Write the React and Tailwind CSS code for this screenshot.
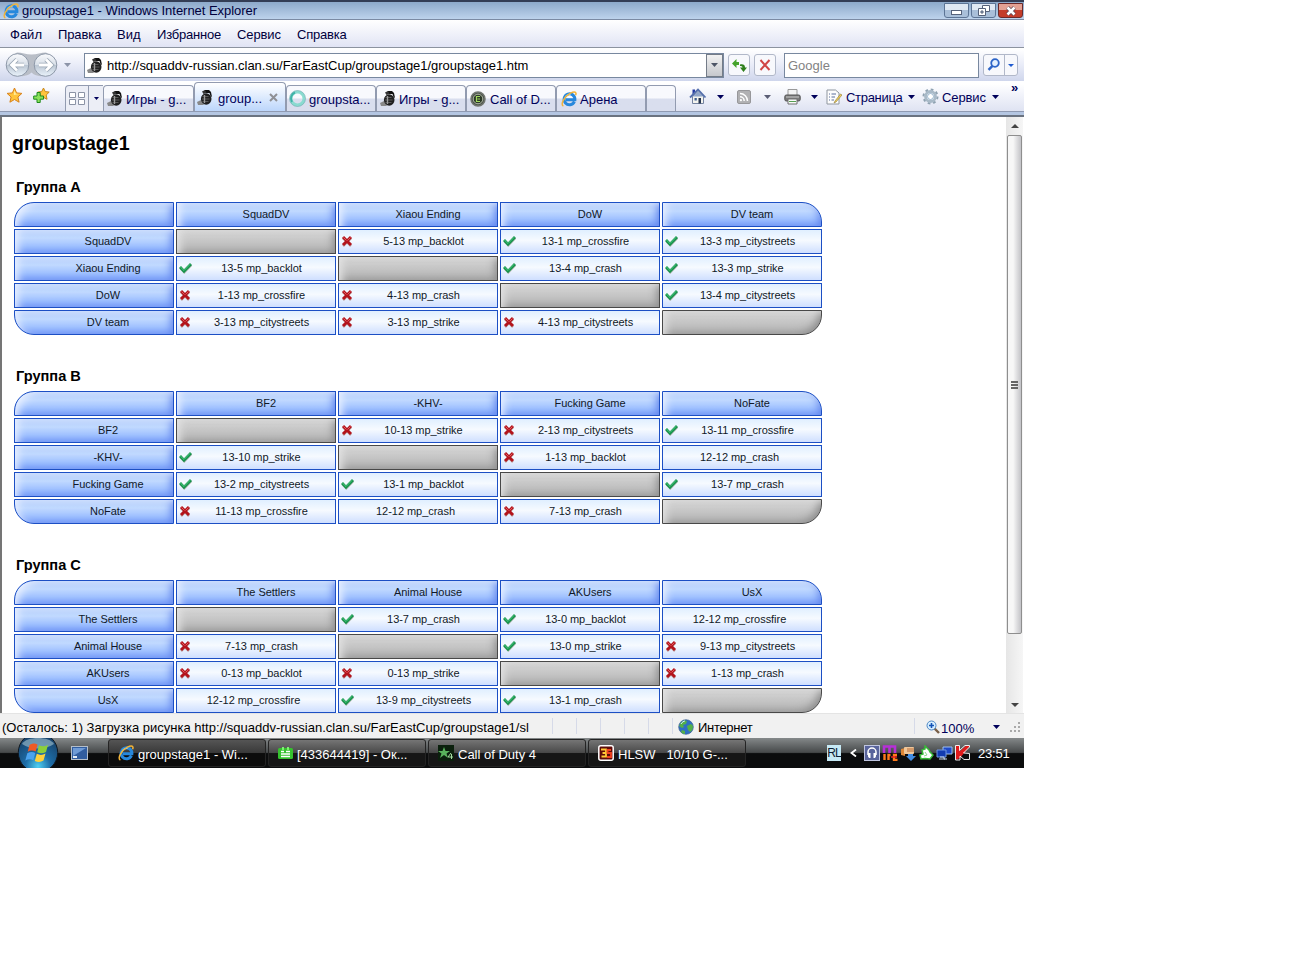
import { clsx } from 'clsx';

const groups = [
    {
        title: 'Группа A',
        teams: ['SquadDV', 'Xiaou Ending', 'DoW', 'DV team'],
        results: [
            [null, '5-13 mp_backlot', '13-1 mp_crossfire', '13-3 mp_citystreets'],
            ['13-5 mp_backlot', null, '13-4 mp_crash', '13-3 mp_strike'],
            ['1-13 mp_crossfire', '4-13 mp_crash', null, '13-4 mp_citystreets'],
            ['3-13 mp_citystreets', '3-13 mp_strike', '4-13 mp_citystreets', null],
        ],
    },
    {
        title: 'Группа B',
        teams: ['BF2', '-KHV-', 'Fucking Game', 'NoFate'],
        results: [
            [null, '10-13 mp_strike', '2-13 mp_citystreets', '13-11 mp_crossfire'],
            ['13-10 mp_strike', null, '1-13 mp_backlot', '12-12 mp_crash'],
            ['13-2 mp_citystreets', '13-1 mp_backlot', null, '13-7 mp_crash'],
            ['11-13 mp_crossfire', '12-12 mp_crash', '7-13 mp_crash', null],
        ],
    },
    {
        title: 'Группа C',
        teams: ['The Settlers', 'Animal House', 'AKUsers', 'UsX'],
        results: [
            [null, '13-7 mp_crash', '13-0 mp_backlot', '12-12 mp_crossfire'],
            ['7-13 mp_crash', null, '13-0 mp_strike', '9-13 mp_citystreets'],
            ['0-13 mp_backlot', '0-13 mp_strike', null, '1-13 mp_crash'],
            ['12-12 mp_crossfire', '13-9 mp_citystreets', '13-1 mp_crash', null],
        ],
    },
];

/* ---------- icons ---------- */

function IeIcon() {
    return (
        <svg width="16" height="16" viewBox="0 0 16 16" className="shrink-0">
            <path d="M13.4 10.6A5.4 5.4 0 1 1 13.9 8.7H5" fill="none" stroke="#2788dc" strokeWidth="3" />
            <path d="M4 7A4.6 4.6 0 0 1 9.5 3.6" fill="none" stroke="#8edaff" strokeWidth="1.2" />
            <path d="M2.4 15C-1 13.5 3.2 5.6 9.4 2.2 13.8 0 16 1.2 14.6 4.2" fill="none" stroke="#f2b43a" strokeWidth="1.5" />
        </svg>
    );
}

function Grenade() {
    return (
        <svg width="17" height="17" viewBox="0 0 17 17" className="shrink-0">
            <path d="M0 13l4-2 3 5H1z" fill="#888" />
            <path d="M6 4L8 1h4l2 2 1 5-1.5-1-1-3z" fill="#111" />
            <ellipse cx="9.2" cy="10" rx="5.3" ry="5.8" fill="#202020" />
            <path d="M5.5 7.500h6M5 10h7.500M5.500 12.500h6" stroke="#585858" />
            <path d="M7.500 6v8" stroke="#999" strokeWidth="1.4" />
            <path d="M5 2.500L8 1l1.500 3-3 1z" fill="#333" />
        </svg>
    );
}

function Caret({ color = '#00005a' }) {
    return (
        <svg width="7" height="4" viewBox="0 0 7 4" className="shrink-0">
            <path d="M0 0h7L3.5 4z" fill={color} />
        </svg>
    );
}

function Star() {
    return (
        <svg width="17" height="17" viewBox="0 0 17 17" className="shrink-0">
            <path d="M8.5 1l2.1 4.9 5.3.5-4 3.6 1.2 5.2-4.6-2.7-4.6 2.7 1.2-5.2-4-3.6 5.3-.5z" fill="#ffc43c" stroke="#d9821a" />
            <path d="M8.5 3.5l1.3 3.3 3 .3-5 1z" fill="#fff0a8" />
        </svg>
    );
}

function StarPlus() {
    return (
        <svg width="17" height="17" viewBox="0 0 17 17" className="shrink-0">
            <path d="M10.5 1l1.7 3.6 4 .5-3 2.9.8 4.3-3.5-2-3.8 2 .9-4.3-2.9-2.9 4-.5z" fill="#ffc43c" stroke="#c8871a" />
            <path d="M4 5.5h3.2V9h3.3v3.2H7.2v3.3H4v-3.3H.7V9H4z" fill="#8be25a" stroke="#1e8a1e" />
        </svg>
    );
}

function NavButtons() {
    return (
        <svg width="56" height="28" viewBox="0 0 56 28" className="shrink-0">
            <defs>
                <linearGradient id="nav" x1="0" y1="0" x2="0" y2="1">
                    <stop offset="0" stopColor="#fafbfd" />
                    <stop offset=".48" stopColor="#d8dfe8" />
                    <stop offset=".52" stopColor="#bcc7d4" />
                    <stop offset="1" stopColor="#eaf3fb" />
                </linearGradient>
            </defs>
            <path d="M13 1.500c5 0 9 2 14.500 2s9.500-2 14.500-2a12.500 12.500 0 1 1-14.500 20A12.500 12.500 0 1 1 13 1.500z" fill="#b9bec7" />
            <circle cx="13.5" cy="14" r="11.3" fill="url(#nav)" stroke="#8d98a8" />
            <circle cx="41.5" cy="14" r="11.3" fill="url(#nav)" stroke="#8d98a8" />
            <path d="M20 14H8M13 8.500L7.500 14l5.500 5.500" fill="none" stroke="#9aa6b5" strokeWidth="4.5" />
            <path d="M20 14H8M13 8.500L7.500 14l5.500 5.500" fill="none" stroke="#fff" strokeWidth="2.8" />
            <path d="M35 14h12M42 8.500l5.500 5.500-5.500 5.500" fill="none" stroke="#9aa6b5" strokeWidth="4.5" />
            <path d="M35 14h12M42 8.500l5.500 5.500-5.500 5.500" fill="none" stroke="#fff" strokeWidth="2.8" />
        </svg>
    );
}

function Spinner() {
    return (
        <svg width="17" height="17" viewBox="0 0 17 17" className="shrink-0">
            <circle cx="8.5" cy="8.5" r="6.5" fill="none" stroke="#8adbd0" strokeWidth="3" />
            <path d="M3 12A6.5 6.5 0 0 1 6 2.500" fill="none" stroke="#3fb3a8" strokeWidth="2" />
            <circle cx="8.5" cy="8.5" r="8" fill="none" stroke="#6fa9b0" strokeWidth=".6" />
        </svg>
    );
}

function CodIcon() {
    return (
        <svg width="16" height="16" viewBox="0 0 16 16" className="shrink-0">
            <circle cx="8" cy="8" r="7" fill="#4f564e" stroke="#70756f" strokeWidth="1.5" />
            <circle cx="8" cy="8" r="4.8" fill="#2c3a28" stroke="#b0b8a6" />
            <path d="M10 5.500H6.500v5H10M7.500 8H10" fill="none" stroke="#9fd65d" strokeWidth="1.2" />
        </svg>
    );
}

function Check() {
    return (
        <svg width="13" height="12" viewBox="0 0 13 12" className="shrink-0">
            <path d="M1.5 6.5l3.8 4L12.5 3" fill="none" stroke="#b5bab6" strokeWidth="2.2" />
            <path d="M1 5l4 4.200L12 2" fill="none" stroke="#15914a" strokeWidth="2.8" />
            <path d="M1.2 4.8L5 8.5l6.2-6.300" fill="none" stroke="#52cc84" strokeWidth="1" />
        </svg>
    );
}

function Cross() {
    return (
        <svg width="12" height="12" viewBox="0 0 12 12" className="shrink-0">
            <path d="M2 3l8 8M10 3l-8 8" stroke="#b9a5a5" strokeWidth="2.5" />
            <path d="M2 2l8 8M10 2l-8 8" stroke="#b3141c" strokeWidth="3" />
            <path d="M2.5 2.500l3 3M9.500 2.500l-3 3" stroke="#e25a5f" />
        </svg>
    );
}

function HomeIcon() {
    return (
        <svg width="18" height="17" viewBox="0 0 18 17" className="shrink-0">
            <path d="M3.5 1.500h2.500v5H3.500z" fill="#2238a0" />
            <path d="M3.5 8.500L9.500 3l5 5.500v7h-11z" fill="#f4f4ee" stroke="#7583a0" />
            <path d="M4 8.500L9 3.500l5.500 5z" fill="#8fa5c9" />
            <path d="M1 9.500L9 1.500l7.500 8" fill="none" stroke="#5570ad" strokeWidth="1.8" />
            <path d="M9.5 10H12v5.500H9.500z" fill="#26344f" />
            <path d="M5.5 10h2.300v2.500H5.500z" fill="#3f5f92" />
        </svg>
    );
}

function RssIcon() {
    return (
        <svg width="14" height="14" viewBox="0 0 14 14" className="shrink-0">
            <rect x=".5" y=".5" width="13" height="13" rx="1.5" fill="#b1b1b3" stroke="#97979a" />
            <path d="M3 3.500a7.500 7.500 0 0 1 7.500 7.500M3 6.800A4.200 4.200 0 0 1 7.200 11" fill="none" stroke="#fff" strokeWidth="1.5" />
            <circle cx="3.9" cy="10.2" r="1.1" fill="#fff" />
        </svg>
    );
}

function PrinterIcon() {
    return (
        <svg width="17" height="16" viewBox="0 0 17 16" className="shrink-0">
            <path d="M4 .5h9V7H4z" fill="#f3f3f3" stroke="#999" />
            <rect x=".8" y="6" width="15.4" height="6" rx="1.5" fill="#7b7b7b" stroke="#545454" />
            <path d="M4 10h9v5H4z" fill="#fafafa" stroke="#6e6e6e" />
            <path d="M2 8h13" stroke="#c9c9c9" />
            <path d="M5 12.500h7" stroke="#57a052" />
        </svg>
    );
}

function PageIcon() {
    return (
        <svg width="16" height="16" viewBox="0 0 16 16" className="shrink-0">
            <path d="M1 1h8.500L13 4v11H1z" fill="#fdfdfd" stroke="#8f969f" />
            <path d="M3 5h1M5.500 5H10M3 8h1M5.500 8H9M3 11h1M5.500 11H8" stroke="#5a6f9c" />
            <path d="M14.5 5l-5.500 7-1 2 2-1 6-7z" fill="#f0cf59" stroke="#8b793a" strokeWidth=".6" />
        </svg>
    );
}

function GearIcon() {
    return (
        <svg width="17" height="17" viewBox="0 0 17 17" className="shrink-0">
            <circle cx="8.5" cy="8.5" r="7" fill="none" stroke="#8fa2b1" strokeWidth="2" strokeDasharray="2.7 2.8" />
            <circle cx="8.5" cy="8.5" r="5" fill="#fff" stroke="#a9bac8" strokeWidth="2.8" />
            <circle cx="8.5" cy="8.5" r="3" fill="#fff" stroke="#7fa3c2" strokeWidth=".8" />
        </svg>
    );
}

function RefreshIcon() {
    return (
        <svg width="15" height="13" viewBox="0 0 15 13">
            <path d="M0 4.500L4.500 0v3H7v3H4.500v3z" fill="#45a32c" />
            <path d="M8 5.500c3-.5 5 0 5 3h2L11.500 13 8 8.500h2.500c0-1-.7-1.500-2.500-1.500z" fill="#2f7f1c" />
        </svg>
    );
}

function Globe() {
    return (
        <svg width="16" height="16" viewBox="0 0 16 16" className="shrink-0">
            <circle cx="8" cy="8" r="7.3" fill="#2e6fc4" stroke="#3c6291" strokeWidth=".7" />
            <path d="M3 3.500C5 1 8 1 9 2L8 5 5 6l1 2-2 1-3-2zM9 7l4-2 2 2c0 3-1 5-3 6l-2-2zM4 11l3 1v3c-2 0-3-1-4-2z" fill="#54b04a" />
            <path d="M3 5c1-2 3-3 4-3" stroke="#d6efff" fill="none" />
        </svg>
    );
}

function StartOrb() {
    return (
        <svg width="42" height="30" viewBox="0 0 42 30" className="shrink-0">
            <defs>
                <radialGradient id="orb" cx=".5" cy=".85" r=".8">
                    <stop offset="0" stopColor="#4fd0f2" />
                    <stop offset=".4" stopColor="#1d6ca6" />
                    <stop offset="1" stopColor="#173f66" />
                </radialGradient>
            </defs>
            <circle cx="21" cy="14.5" r="19.7" fill="url(#orb)" stroke="#101820" />
            <path d="M5 6C9-2 33-2 37 6c-9 6-23 6-32 0z" fill="#9bbccb" opacity=".65" />
            <path d="M12.500 7c3-2 5.500-2 8-.5l-1.800 7c-3-1.500-5.500-1.500-8 .2z" fill="#ef5a25" />
            <path d="M22 7.200c3 1.600 6 1.500 9-.4l-2 7.200c-3 1.700-6 1.800-8.800.2z" fill="#8ccf3a" />
            <path d="M10.300 15.300c3-1.800 5.500-1.700 8-.3l-2 7.200c-2.600-1.300-5-1.300-8 .3z" fill="#4ba3ee" />
            <path d="M19.800 15.800c3 1.500 5.500 1.500 8.700-.2l-2 7c-3 1.800-5.700 1.800-8.700.3z" fill="#ffd13c" />
        </svg>
    );
}

/* ---------- browser chrome ---------- */

function TitleBar() {
    return (
        <div className="h-[20px] flex items-center justify-between border-t-2 border-b border-t-[#333d55] border-b-[#7b8aa3] bg-linear-to-b from-[#8da9ca] to-[#bdd3ec]">
            <div className="flex items-center gap-[3px] pl-[3px] text-[#00003c]">
                <IeIcon />
                <span className="tracking-[-0.03px]">groupstage1 - Windows Internet Explorer</span>
            </div>
            <div className="flex gap-[2px] h-[15px] pr-[1px]">
                <div className="w-[25px] rounded-b-[3px] border border-[#5c7495] bg-linear-to-b from-[#dfe8f3] from-45% to-[#a9bfd9] to-50% flex items-end justify-center pb-[2px]">
                    <div className="w-[11px] h-[5px] bg-white border border-[#56627a]" />
                </div>
                <div className="w-[25px] rounded-b-[3px] border border-[#5c7495] bg-linear-to-b from-[#dfe8f3] from-45% to-[#a9bfd9] to-50% flex items-center justify-center">
                    <svg width="12" height="11" viewBox="0 0 12 11">
                        <path d="M4.5.5h7v6h-7z" fill="#fff" stroke="#56627a" />
                        <path d="M.5 3.500h7v7h-7z" fill="#fff" stroke="#56627a" />
                        <path d="M3 6h2v2H3z" fill="#b5c7dd" stroke="#56627a" />
                    </svg>
                </div>
                <div className="w-[25px] rounded-b-[3px] border border-[#6b2a2a] bg-linear-to-b from-[#e4a193] from-45% to-[#c43d2a] to-50% flex items-center justify-center">
                    <svg width="12" height="10" viewBox="0 0 12 10">
                        <path d="M2.500 1.500l7 7M9.500 1.500l-7 7" stroke="#5d4350" strokeWidth="4" />
                        <path d="M2.500 1.500l7 7M9.500 1.500l-7 7" stroke="#fff" strokeWidth="2.6" />
                    </svg>
                </div>
            </div>
        </div>
    );
}

function MenuBar() {
    return (
        <div className="h-[28px] flex items-center gap-4 pl-[10px] pt-[2px] border-b border-[#8c939f] bg-linear-to-b from-white to-[#e1e4f4] text-[#00003c]">
            <span className="w-[32px]">Файл</span>
            <span className="w-[43px] tracking-[-0.1px]">Правка</span>
            <span className="w-[24px]">Вид</span>
            <span className="w-[64px] tracking-[-0.2px]">Избранное</span>
            <span className="w-[44px] tracking-[-0.1px]">Сервис</span>
            <span className="tracking-[-0.2px]">Справка</span>
        </div>
    );
}

function AddressBar() {
    return (
        <div className="h-[33px] flex items-center pl-[4px] border-t border-white bg-linear-to-b from-white via-[#e9ecf8] to-[#cfd6ec]">
            <NavButtons />
            <div className="w-[24px] pl-[4px]">
                <Caret color="#8c94a8" />
            </div>
            <div className="w-[640px] h-[25px] flex items-center border border-[#78889f] bg-white">
                <div className="flex-1 flex items-center gap-[3px] pl-[2px] text-black">
                    <Grenade />
                    <span className="pt-px tracking-[-0.02px]">http://squaddv-russian.clan.su/FarEastCup/groupstage1/groupstage1.htm</span>
                </div>
                <div className="w-[17px] h-full border border-[#747c88] bg-linear-to-b from-[#f2f2f2] to-[#c6c8cd] flex items-center justify-center">
                    <Caret color="#4d5566" />
                </div>
            </div>
            <div className="ml-[4px] size-[22px] rounded-[3px] border border-[#b1b8c9] bg-[#f7f8fc] flex items-center justify-center">
                <RefreshIcon />
            </div>
            <div className="ml-[4px] size-[22px] rounded-[3px] border border-[#b1b8c9] bg-[#f7f8fc] flex items-center justify-center">
                <svg width="12" height="12" viewBox="0 0 12 12">
                    <path d="M1.500 1l9 10M10.500 1l-9 10" stroke="#d04545" strokeWidth="2" />
                </svg>
            </div>
            <div className="ml-[8px] w-[195px] h-[25px] border border-[#78889f] bg-white flex items-center pl-[3px] pt-px text-[#838383]">
                Google
            </div>
            <div className="ml-[4px] w-[35px] h-[22px] rounded-[3px] border border-[#b1b8c9] bg-[#f7f8fc] flex">
                <div className="w-[21px] border-r border-[#b1b8c9] flex items-center justify-center">
                    <svg width="14" height="14" viewBox="0 0 14 14">
                        <circle cx="8" cy="5" r="3.8" fill="#e3f0ff" stroke="#2d65c8" strokeWidth="1.8" />
                        <path d="M5.500 7.800l-4 4" stroke="#2d65c8" strokeWidth="2.4" />
                    </svg>
                </div>
                <div className="flex-1 flex items-center justify-center">
                    <svg width="6" height="3" viewBox="0 0 6 3"><path d="M0 0h6L3 3z" fill="#1f5ad0" /></svg>
                </div>
            </div>
        </div>
    );
}

function Tab({ icon, label, active, className }) {
    return (
        <div
            className={clsx(
                'flex items-center gap-[2px] pl-[2px] border border-b-0 border-[#929bb0] rounded-t-[4px] whitespace-nowrap',
                active
                    ? 'h-[29px] bg-linear-to-b from-white to-[#bcd6fb]'
                    : 'h-[26px] bg-linear-to-b from-[#f8f9fd] from-48% to-[#d9deee] to-52%',
                className
            )}
        >
            {icon}
            <span className="pt-[3px]">{label}</span>
            {active && (
                <svg width="9" height="9" viewBox="0 0 9 9" className="ml-[3px]">
                    <path d="M1 1l7 7M8 1L1 8" stroke="#8f9095" strokeWidth="2" />
                </svg>
            )}
        </div>
    );
}

function TabBar() {
    return (
        <div className="h-[31px] flex border-b border-[#8f9ab2] bg-linear-to-b from-white from-10% via-[#f0f2fa] to-[#dfe3f2] text-[#00005a]">
            <div className="flex gap-[10px] pl-[6px] pt-[6px] w-[65px]">
                <Star />
                <StarPlus />
            </div>
            <div className="flex items-end">
                <div className="w-[24px] h-[26px] border border-b-0 border-[#929bb0] rounded-tl-[4px] bg-[#eceef6] flex items-center justify-center">
                    <svg width="16" height="13" viewBox="0 0 16 13">
                        <path d="M.5.5h6v5h-6zM9.500.5h6v5h-6zM.5 7.500h6v5h-6zM9.500 7.500h6v5h-6z" fill="#fff" stroke="#8b93a5" />
                    </svg>
                </div>
                <div className="w-[14px] h-[26px] border-t border-[#929bb0] bg-[#eceef6] flex items-center justify-center">
                    <svg width="5" height="3" viewBox="0 0 5 3"><path d="M0 0h5L2.500 3z" fill="#00005a" /></svg>
                </div>
                <Tab icon={<Grenade />} label="Игры - g..." className="w-[91px] pl-[3px]" />
                <Tab icon={<Grenade />} label="group..." active className="w-[92px] gap-[4px]" />
                <Tab icon={<Spinner />} label="groupsta..." className="w-[90px] gap-[3px]" />
                <Tab icon={<Grenade />} label="Игры - g..." className="w-[90px] pl-[3px]" />
                <Tab icon={<CodIcon />} label="Call of D..." className="w-[90px] pl-[3px] gap-[4px]" />
                <Tab icon={<IeIcon />} label="Арена" className="w-[90px] pl-[4px] gap-[3px]" />
                <Tab className="w-[30px]" />
            </div>
            <div className="flex items-center pl-[13px] h-[31px]">
                <HomeIcon />
                <div className="w-[30px] pl-[10px]"><Caret /></div>
                <RssIcon />
                <div className="w-[33px] pl-[13px]"><Caret color="#5a5d74" /></div>
                <PrinterIcon />
                <div className="w-[25px] pl-[10px]"><Caret /></div>
                <PageIcon />
                <span className="ml-[4px] w-[62px] pt-[2px] tracking-[-0.3px]">Страница</span>
                <Caret />
                <div className="w-[7px]" />
                <GearIcon />
                <span className="ml-[3px] w-[50px] pt-[2px] tracking-[-0.1px]">Сервис</span>
                <Caret />
                <span className="ml-[12px] mb-[18px] font-bold">»</span>
            </div>
        </div>
    );
}

/* ---------- page ---------- */

function HeadCell({ children, className }) {
    return (
        <div
            className={clsx(
                'w-[160px] h-[25px] flex items-center justify-center pb-px border border-[#1c4fc4] overflow-hidden',
                'bg-linear-to-b from-[#a6c4fa] via-[#bfd8ff] via-35% to-[#8ab0ff] shadow-[inset_6px_4px_8px_-3px_#eaf1ff,inset_-6px_-4px_8px_-4px_#5f83ec]',
                className
            )}
        >
            {children}
        </div>
    );
}

function EmptyCell({ className }) {
    return (
        <div
            className={clsx(
                'w-[160px] h-[25px] border border-[#484848] bg-linear-to-b from-[#c9c9c9] via-[#cacaca] via-35% to-[#b4b4b4] shadow-[inset_6px_4px_8px_-3px_#e4e4e4,inset_-6px_-4px_8px_-4px_#8c8c8c]',
                className
            )}
        />
    );
}

function ResultCell({ text }) {
    const [own, other] = text.split(' ')[0].split('-').map(Number);
    const draw = own === other;
    return (
        <div className="w-[160px] h-[25px] flex items-center pb-px border border-[#1c4fc4] bg-linear-to-b from-[#e0efff] via-[#f6faff] via-45% to-[#cfdfff]">
            {!draw && <div className="w-[14px] pl-[2px]">{own > other ? <Check /> : <Cross />}</div>}
            <span className={clsx('flex-1 text-center', draw ? 'pr-[5px]' : 'pr-[3px]')}>{text}</span>
        </div>
    );
}

function GroupTable({ group }) {
    const last = group.teams.length - 1;
    return (
        <section className="h-[189px]">
            <h2 className="h-[26px] pl-[2px] leading-[22px] text-[14.6px] font-bold">{group.title}</h2>
            <div className="grid grid-cols-[repeat(5,160px)] gap-[2px] text-[11px] leading-[14px] tracking-[-0.04px] text-[#101828]">
                <HeadCell className="rounded-tl-[20px]" />
                {group.teams.map((team, i) => (
                    <HeadCell key={team} className={clsx('pl-[20px]', i === last && 'rounded-tr-[20px]')}>{team}</HeadCell>
                ))}
                {group.teams.map((team, row) => [
                    <HeadCell key={team} className={clsx('pl-[28px]', row === last && 'rounded-bl-[20px]')}>{team}</HeadCell>,
                    ...group.results[row].map((text, col) =>
                        text ? (
                            <ResultCell key={col} text={text} />
                        ) : (
                            <EmptyCell key={col} className={clsx(row === last && 'rounded-br-[20px]')} />
                        )
                    ),
                ])}
            </div>
        </section>
    );
}

function ScrollBar() {
    return (
        <div className="w-[17px] mr-px flex flex-col items-center bg-linear-to-r from-[#e6e6e6] to-[#f6f6f6]">
            <div className="h-[18px] flex items-center">
                <svg width="8" height="4" viewBox="0 0 8 4"><path d="M0 4h8L4 0z" fill="#444" /></svg>
            </div>
            <div className="w-[15px] h-[499px] rounded-[2px] border border-[#8e8e8e] bg-linear-to-r from-[#f7f7f7] from-40% to-[#c3c3c7] flex flex-col items-center justify-center gap-[1px]">
                <div className="w-[7px] h-[2px] bg-[#666]" />
                <div className="w-[7px] h-[2px] bg-[#666]" />
                <div className="w-[7px] h-[2px] bg-[#666]" />
            </div>
            <div className="flex-1 flex items-end pb-[6px]">
                <svg width="8" height="4" viewBox="0 0 8 4"><path d="M0 0h8L4 4z" fill="#444" /></svg>
            </div>
        </div>
    );
}

function Page() {
    return (
        <div className="h-[596px] flex border-l-2 border-[#757575] bg-white overflow-hidden">
            <main className="flex-1 pl-[12px] text-black">
                <h1 className="-ml-[2px] pt-[12px] h-[59px] leading-[28px] text-[19.6px] font-bold">groupstage1</h1>
                {groups.map((group) => (
                    <GroupTable key={group.title} group={group} />
                ))}
            </main>
            <ScrollBar />
        </div>
    );
}

function StatusBar() {
    return (
        <div className="h-[25px] flex items-center border-t border-[#e4e4e4] bg-[#f1f1f1] text-black">
            <span className="w-[552px] pl-[2px] pt-[3px]">
                (Осталось: 1) Загрузка рисунка http://squaddv-russian.clan.su/FarEastCup/groupstage1/sl
            </span>
            {[0, 1, 2, 3, 4, 5].map((i) => (
                <div key={i} className="w-[24px] h-[16px] border-l border-[#d6dae8]" />
            ))}
            <div className="w-[238px] pt-[2px] -ml-[19px] pl-[1px] flex items-center gap-[4px]">
                <Globe />
                <span className="pt-px tracking-[-0.3px]">Интернет</span>
            </div>
            <div className="h-[16px] ml-[-1px] border-l border-[#d6dae8] pl-[11px] pt-[2px] flex items-center text-[#00005a]">
                <svg width="15" height="15" viewBox="0 0 15 15">
                    <path d="M8 8l5 5" stroke="#7a6048" strokeWidth="2.4" />
                    <circle cx="5.5" cy="5.5" r="4.5" fill="#d6eeff" stroke="#4d86c4" />
                    <path d="M3 5.500h5M5.500 3v5" stroke="#1454b8" strokeWidth="1.6" />
                </svg>
                <span className="w-[52px] pt-[4px]">100%</span>
                <Caret />
                <svg width="12" height="12" viewBox="0 0 12 12" className="ml-[10px]">
                    <path d="M8 1h2v2H8zM8 5h2v2H8zM4 5h2v2H4zM8 9h2v2H8zM4 9h2v2H4zM0 9h2v2H0z" fill="#a9a9a9" />
                </svg>
            </div>
        </div>
    );
}

function TaskButton({ icon, label, active, className }) {
    return (
        <div
            className={clsx(
                'w-[158px] h-[28px] flex items-center gap-[4px] rounded-[3px] border border-[#242424] pl-[9px] whitespace-pre',
                active
                    ? 'bg-linear-to-b from-[#555] via-[#3a3a3a] via-48% to-[#0c0c0c] to-52%'
                    : 'bg-linear-to-b from-[#757575] via-[#4a4a4a] via-48% to-[#161616] to-52%',
                className
            )}
        >
            {icon}
            <span className="pt-[3px]">{label}</span>
        </div>
    );
}

function TaskBar() {
    return (
        <div className="h-[30px] flex items-center bg-linear-to-b from-[#85898a] via-[#474a4b] via-48% to-[#0b0c0d] to-52% text-white">
            <div className="w-[71px] pl-[17px]"><StartOrb /></div>
            <svg width="17" height="14" viewBox="0 0 17 14">
                <rect x=".5" y=".5" width="16" height="13" fill="#315d9f" stroke="#b4bec9" />
                <path d="M2 2h13L2 10z" fill="#6f9bd6" />
                <path d="M2 10h4v2H2z" fill="#e4edf7" />
            </svg>
            <TaskButton active icon={<IeIcon />} label="groupstage1 - Wi..." className="ml-[20px]" />
            <TaskButton
                label="[433644419] - Ок..."
                className="ml-[2px]"
                icon={
                    <svg width="15" height="13" viewBox="0 0 15 13">
                        <rect y="1" width="15" height="11" rx="1.5" fill="#35c22e" />
                        <path d="M4 0h2v3H4zM9 0h2v3H9z" fill="#7df270" />
                        <path d="M3 4.500h3M8 4.500h4M3 7h9M3 9.500h9" stroke="#fff" strokeWidth="1.3" />
                    </svg>
                }
            />
            <TaskButton
                label="Call of Duty 4"
                className="ml-[2px] pl-[8px]"
                icon={
                    <svg width="16" height="16" viewBox="0 0 16 16">
                        <rect width="16" height="16" fill="#0b200d" />
                        <path d="M6 2l1.500 4H12L8.500 8.500 10 13l-4-3-4 3 1.500-4.500L0 6h4.500z" fill="#59b35c" />
                        <path d="M13 8l-3 4h5M13.500 9v5" stroke="#a5dba0" fill="none" />
                    </svg>
                }
            />
            <TaskButton
                label="HLSW   10/10 G-..."
                className="ml-[2px] pl-[8px]"
                icon={
                    <svg width="16" height="16" viewBox="0 0 16 16">
                        <rect x=".8" y=".8" width="14.4" height="14.4" rx="2" fill="#5e0b08" stroke="#fff" strokeWidth="1.5" />
                        <path d="M3 4.500h5v3.500H4.500M8 8v3.500H3.500" fill="none" stroke="#ffca35" strokeWidth="1.8" />
                        <path d="M13 5H9.500v3H13v4H9" fill="none" stroke="#f2401f" strokeWidth="1.8" />
                    </svg>
                }
            />
            <div className="ml-[81px] w-[14px] h-[16px] bg-[#c6e9f5] text-[#0a1c33] text-[12px] leading-[16px] tracking-[-0.8px] text-center">RL</div>
            <svg width="7" height="8" viewBox="0 0 7 8" className="ml-[9px]">
                <path d="M6 .5L1.500 4 6 7.500" fill="none" stroke="#fff" strokeWidth="1.8" />
            </svg>
            <div className="ml-[7px] flex gap-[2px]">
                <svg width="16" height="16" viewBox="0 0 16 16">
                    <rect x=".5" y=".5" width="15" height="15" fill="#59649c" stroke="#bfc5e0" />
                    <path d="M4 10V7a4 4 0 0 1 8 0v3" fill="none" stroke="#fff" strokeWidth="1.5" />
                    <path d="M4 8h2.500v5H5l-1-1.500zM9.500 8H12v3.500L11 13H9.500z" fill="#fff" />
                </svg>
                <svg width="16" height="16" viewBox="0 0 16 16">
                    <path d="M2 8V1.500h11V8M7.500 2v6" fill="none" stroke="#b630d6" strokeWidth="2.6" />
                    <path d="M2.500 9v6M6.500 15v-5h2M15 10h-3v5h3.500" fill="none" stroke="#ff7a1c" strokeWidth="2.4" />
                    <path d="M9 12h6" stroke="#e32020" strokeWidth="1.5" />
                </svg>
                <svg width="17" height="16" viewBox="0 0 17 16">
                    <path d="M1 4l4-1v8l-4-1z" fill="#dd8738" />
                    <rect x="4" y="2" width="10" height="7" rx="1" fill="#efc79b" />
                    <path d="M7 4h7M7 6h7" stroke="#b96d39" />
                    <path d="M8 9h5v2h3l-5 5-5-5h2z" fill="#438ce0" />
                </svg>
                <svg width="15" height="16" viewBox="0 0 15 16">
                    <path d="M6 1l4 4 1 2 3 3-3 4-5-.5L2 14l-1-4 3-1-1-4 3-1z" fill="#fff" stroke="#38ba39" strokeWidth="1.5" />
                    <path d="M6 7l2 3-3 1" stroke="#8bd98b" fill="none" />
                </svg>
                <svg width="17" height="16" viewBox="0 0 17 16">
                    <path d="M7 2h9v7H7z" fill="#1d49c8" stroke="#9fc0f0" />
                    <path d="M1 5h9v7H1z" fill="#123bb0" stroke="#6f95e0" />
                    <path d="M4 12h4v2h3M3 14h6" stroke="#c6d6ee" fill="none" />
                </svg>
                <svg width="16" height="16" viewBox="0 0 16 16">
                    <path d="M1 1h4v5l6-5h4L5 13l-4 2z" fill="#e01b1b" />
                    <path d="M.5.5h4v5L10 .5h4.500v1.500L8.500 8l6 .5v6H9L5 11v4H.5z" fill="none" stroke="#fff" strokeWidth=".9" />
                </svg>
            </div>
            <span className="ml-[7px] pt-[2px] tracking-[-0.2px]">23:51</span>
        </div>
    );
}

export default function App() {
    return (
        <div className="h-[969px] w-full bg-white overflow-hidden font-['Liberation_Sans',Arial,sans-serif] text-[13px] leading-[16px] whitespace-nowrap">
            <div className="w-[1024px] h-[768px] flex flex-col">
                <TitleBar />
                <MenuBar />
                <AddressBar />
                <TabBar />
                <div className="h-[5px] bg-[#b4c6e2] border-b-2 border-[#6a7380]" />
                <Page />
                <StatusBar />
                <TaskBar />
            </div>
        </div>
    );
}
